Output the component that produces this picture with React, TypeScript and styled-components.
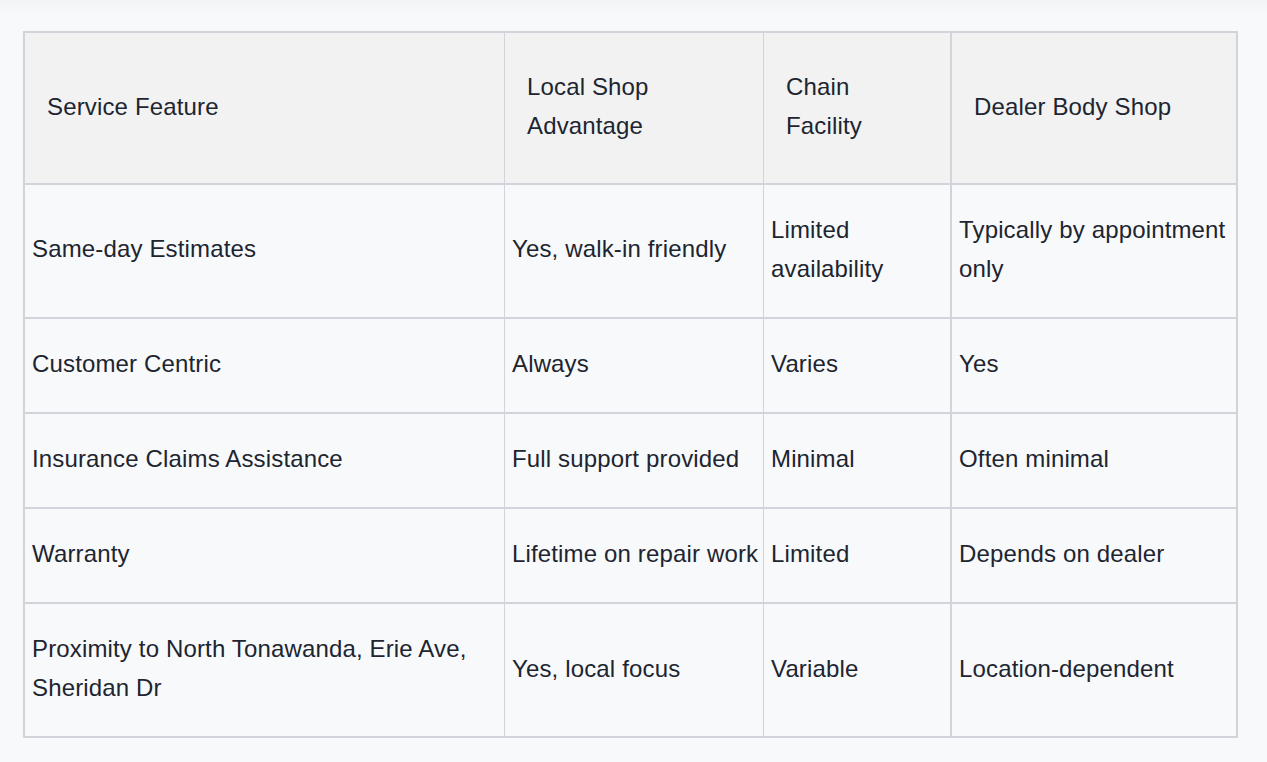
import React from "react";
import styled, { createGlobalStyle } from "styled-components";

const GlobalStyle = createGlobalStyle`
  html, body {
    margin: 0;
    padding: 0;
  }
  body {
    background: linear-gradient(180deg, #f2f3f5 0px, #f8f9fb 14px, #f8f9fb 100%);
    min-height: 762px;
    font-family: "Liberation Sans", Arial, Helvetica, sans-serif;
    color: #1d2530;
  }
`;

const Page = styled.main`
  padding: 31px 0 0 23px;
`;

const Table = styled.table`
  border-collapse: separate;
  border-spacing: 0;
  table-layout: fixed;
  width: 1215px;
  border-top: 2px solid #d1d5db;
  border-left: 2px solid #d1d5db;
  font-size: 24px;
  line-height: 38.4px;
  letter-spacing: 0.15px;
`;

const HeadCell = styled.th<{ $thin?: boolean }>`
  background: #f2f2f2;
  font-weight: 400;
  text-align: left;
  vertical-align: middle;
  padding: 35.4px 22px 37.8px 22px;
  border-right: ${(p) => (p.$thin ? "1px" : "2px")} solid #d1d5db;
  border-bottom: 2px solid #d1d5db;
`;

const Cell = styled.td<{ $thin?: boolean }>`
  background: #f8f9fb;
  text-align: left;
  vertical-align: middle;
  padding: 26.2px 3px 28.6px 7px;
  border-right: ${(p) => (p.$thin ? "1px" : "2px")} solid #d1d5db;
  border-bottom: 2px solid #d1d5db;
`;

const columns = [
  { label: "Service Feature", width: 480, thin: true },
  { label: "Local Shop Advantage", width: 259, thin: true },
  { label: "Chain Facility", width: 188, thin: false },
  { label: "Dealer Body Shop", width: 286, thin: false },
];

const rows: string[][] = [
  ["Same-day Estimates", "Yes, walk-in friendly", "Limited availability", "Typically by appointment only"],
  ["Customer Centric", "Always", "Varies", "Yes"],
  ["Insurance Claims Assistance", "Full support provided", "Minimal", "Often minimal"],
  ["Warranty", "Lifetime on repair work", "Limited", "Depends on dealer"],
  ["Proximity to North Tonawanda, Erie Ave, Sheridan Dr", "Yes, local focus", "Variable", "Location-dependent"],
];

export default function App() {
  return (
    <>
      <GlobalStyle />
      <Page>
        <Table>
          <colgroup>
            {columns.map((c) => (
              <col key={c.label} style={{ width: c.width }} />
            ))}
          </colgroup>
          <thead>
            <tr>
              {columns.map((c) => (
                <HeadCell key={c.label} $thin={c.thin}>
                  {c.label}
                </HeadCell>
              ))}
            </tr>
          </thead>
          <tbody>
            {rows.map((r) => (
              <tr key={r[0]}>
                {r.map((v, i) => (
                  <Cell key={i} $thin={columns[i].thin}>
                    {v}
                  </Cell>
                ))}
              </tr>
            ))}
          </tbody>
        </Table>
      </Page>
    </>
  );
}
